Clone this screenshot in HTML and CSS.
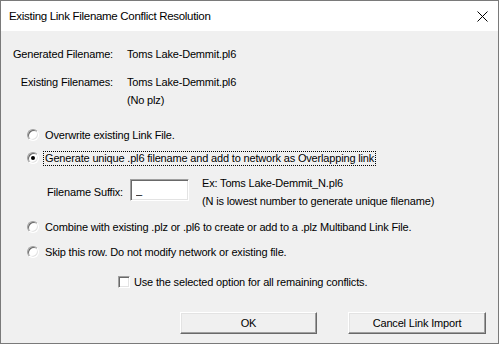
FILE: index.html
```html
<!DOCTYPE html>
<html lang="en">
<head>
    <meta charset="UTF-8">
    <meta name="viewport" content="width=device-width, initial-scale=1.0">
    <title>Existing Link Filename Conflict Resolution</title>
    <link rel="stylesheet" href="styles.css">
</head>
<body>
    <div class="dialog">
        <div class="titlebar">
            <span class="title">Existing Link Filename Conflict Resolution</span>
            <svg class="close" width="11" height="11" viewBox="0 0 11 11">
                <path d="M0.5 0.5 L10.5 10.5 M10.5 0.5 L0.5 10.5" stroke="#000" stroke-width="1" fill="none"/>
            </svg>
        </div>

        <div class="content">
            <div class="field">
                <div class="field-label">Generated Filename:</div>
                <div class="field-value">Toms Lake-Demmit.pl6</div>
            </div>
            <div class="field">
                <div class="field-label">Existing Filenames:</div>
                <div class="field-value">Toms Lake-Demmit.pl6<br>(No plz)</div>
            </div>

            <div class="option option-first">
                <span class="radio"></span>
                <span class="option-text">Overwrite existing Link File.</span>
            </div>
            <div class="option option-tight">
                <span class="radio checked"></span>
                <span class="option-text focused">Generate unique .pl6 filename and add to network as Overlapping link</span>
            </div>

            <div class="suffix">
                <label class="suffix-label" for="suffix">Filename Suffix:</label>
                <input class="suffix-input" id="suffix" type="text" value="_">
                <div class="suffix-example">
                    Ex: Toms Lake-Demmit_N.pl6<br>
                    (N is lowest number to generate unique filename)
                </div>
            </div>

            <div class="option option-after-suffix">
                <span class="radio"></span>
                <span class="option-text">Combine with existing .plz or .pl6 to create or add to a .plz Multiband Link File.</span>
            </div>
            <div class="option option-last">
                <span class="radio"></span>
                <span class="option-text">Skip this row. Do not modify network or existing file.</span>
            </div>

            <div class="check-row">
                <span class="checkbox"></span>
                <span>Use the selected option for all remaining conflicts.</span>
            </div>

            <div class="buttons">
                <button class="btn">OK</button>
                <button class="btn btn-cancel">Cancel Link Import</button>
            </div>
        </div>
    </div>
</body>
</html>
```

FILE: styles.css
```css
* {
    box-sizing: border-box;
}
body {
    margin: 0;
    padding: 0;
    font-family: "Liberation Sans", Arial, sans-serif;
    font-size: 11px;
    letter-spacing: -0.17px;
    color: #000;
    background-color: #f0f0f0;
}
.dialog {
    width: 499px;
    height: 344px;
    border: 1px solid #7a7a7a;
    background-color: #f0f0f0;
    overflow: hidden;
}
.titlebar {
    height: 30px;
    background-color: #fff;
    display: flex;
    align-items: center;
    justify-content: space-between;
    padding: 0 10px 0 8px;
}
.title {
    font-family: "Liberation Sans", Arial, sans-serif;
    font-size: 11.5px;
    letter-spacing: -0.3px;
    color: #000;
}
.close {
    display: block;
    margin-top: 1px;
}
.content {
    padding-top: 14px;
}
.field {
    display: flex;
    line-height: 18px;
}
.field + .field {
    margin-top: 10px;
}
.field-label {
    width: 112px;
    text-align: right;
    margin-right: 14px;
}
/* radio rows */
.option {
    display: flex;
    align-items: center;
    height: 18px;
    padding-left: 26px;
}
.option-first {
    margin-top: 17px;
}
.option-tight {
    margin-top: 5px;
}
.option-after-suffix {
    margin-top: 8px;
}
.option-last {
    margin-top: 7px;
}
.radio {
    position: relative;
    width: 12px;
    height: 12px;
    border-radius: 50%;
    background-color: #fff;
    border: 1px solid;
    border-color: #a0a0a0 #fff #fff #a0a0a0;
    box-shadow: inset 1px 1px #696969, inset -1px -1px #e3e3e3;
    margin-right: 6px;
    flex-shrink: 0;
}
.radio.checked::after {
    content: "";
    position: absolute;
    left: 3px;
    top: 3px;
    width: 4px;
    height: 4px;
    border-radius: 50%;
    background-color: #000;
}
.option-text {
    line-height: 13px;
    padding: 0 1px;
    margin-left: -1px;
}
.focused {
    outline: 1px dotted #000;
}
/* suffix */
.suffix {
    display: flex;
    align-items: flex-start;
    margin-top: 7px;
    padding-left: 46px;
    line-height: 18px;
}
.suffix-label {
    width: 83px;
    margin-top: 9px;
}
.suffix-input {
    width: 59px;
    height: 22px;
    margin: 5px 0 0 0;
    padding: 0 0 0 5px;
    font-family: inherit;
    font-size: 11px;
    background-color: #fff;
    border: 1px solid;
    border-color: #a0a0a0 #fff #fff #a0a0a0;
    box-shadow: inset 1px 1px #696969, inset -1px -1px #e3e3e3;
    outline: none;
}
.suffix-example {
    margin-left: 13px;
}
/* checkbox */
.check-row {
    display: flex;
    align-items: center;
    height: 18px;
    margin-top: 12px;
    padding-left: 117px;
}
.checkbox {
    width: 12px;
    height: 12px;
    background-color: #fff;
    border: 1px solid;
    border-color: #a0a0a0 #fff #fff #a0a0a0;
    box-shadow: inset 1px 1px #696969, inset -1px -1px #e3e3e3;
    margin-right: 4px;
}
/* buttons */
.buttons {
    display: flex;
    margin-top: 21px;
    padding-left: 179px;
    gap: 31px;
}
.btn {
    width: 137px;
    height: 22px;
    padding: 0;
    font-family: inherit;
    font-size: 11px;
    letter-spacing: -0.17px;
    color: #000;
    background-color: #f0f0f0;
    border: 1px solid;
    border-color: #fff #696969 #696969 #fff;
    box-shadow: inset -1px -1px #a0a0a0, inset 1px 1px #e3e3e3;
}
.btn-cancel {
    width: 138px;
}
```
